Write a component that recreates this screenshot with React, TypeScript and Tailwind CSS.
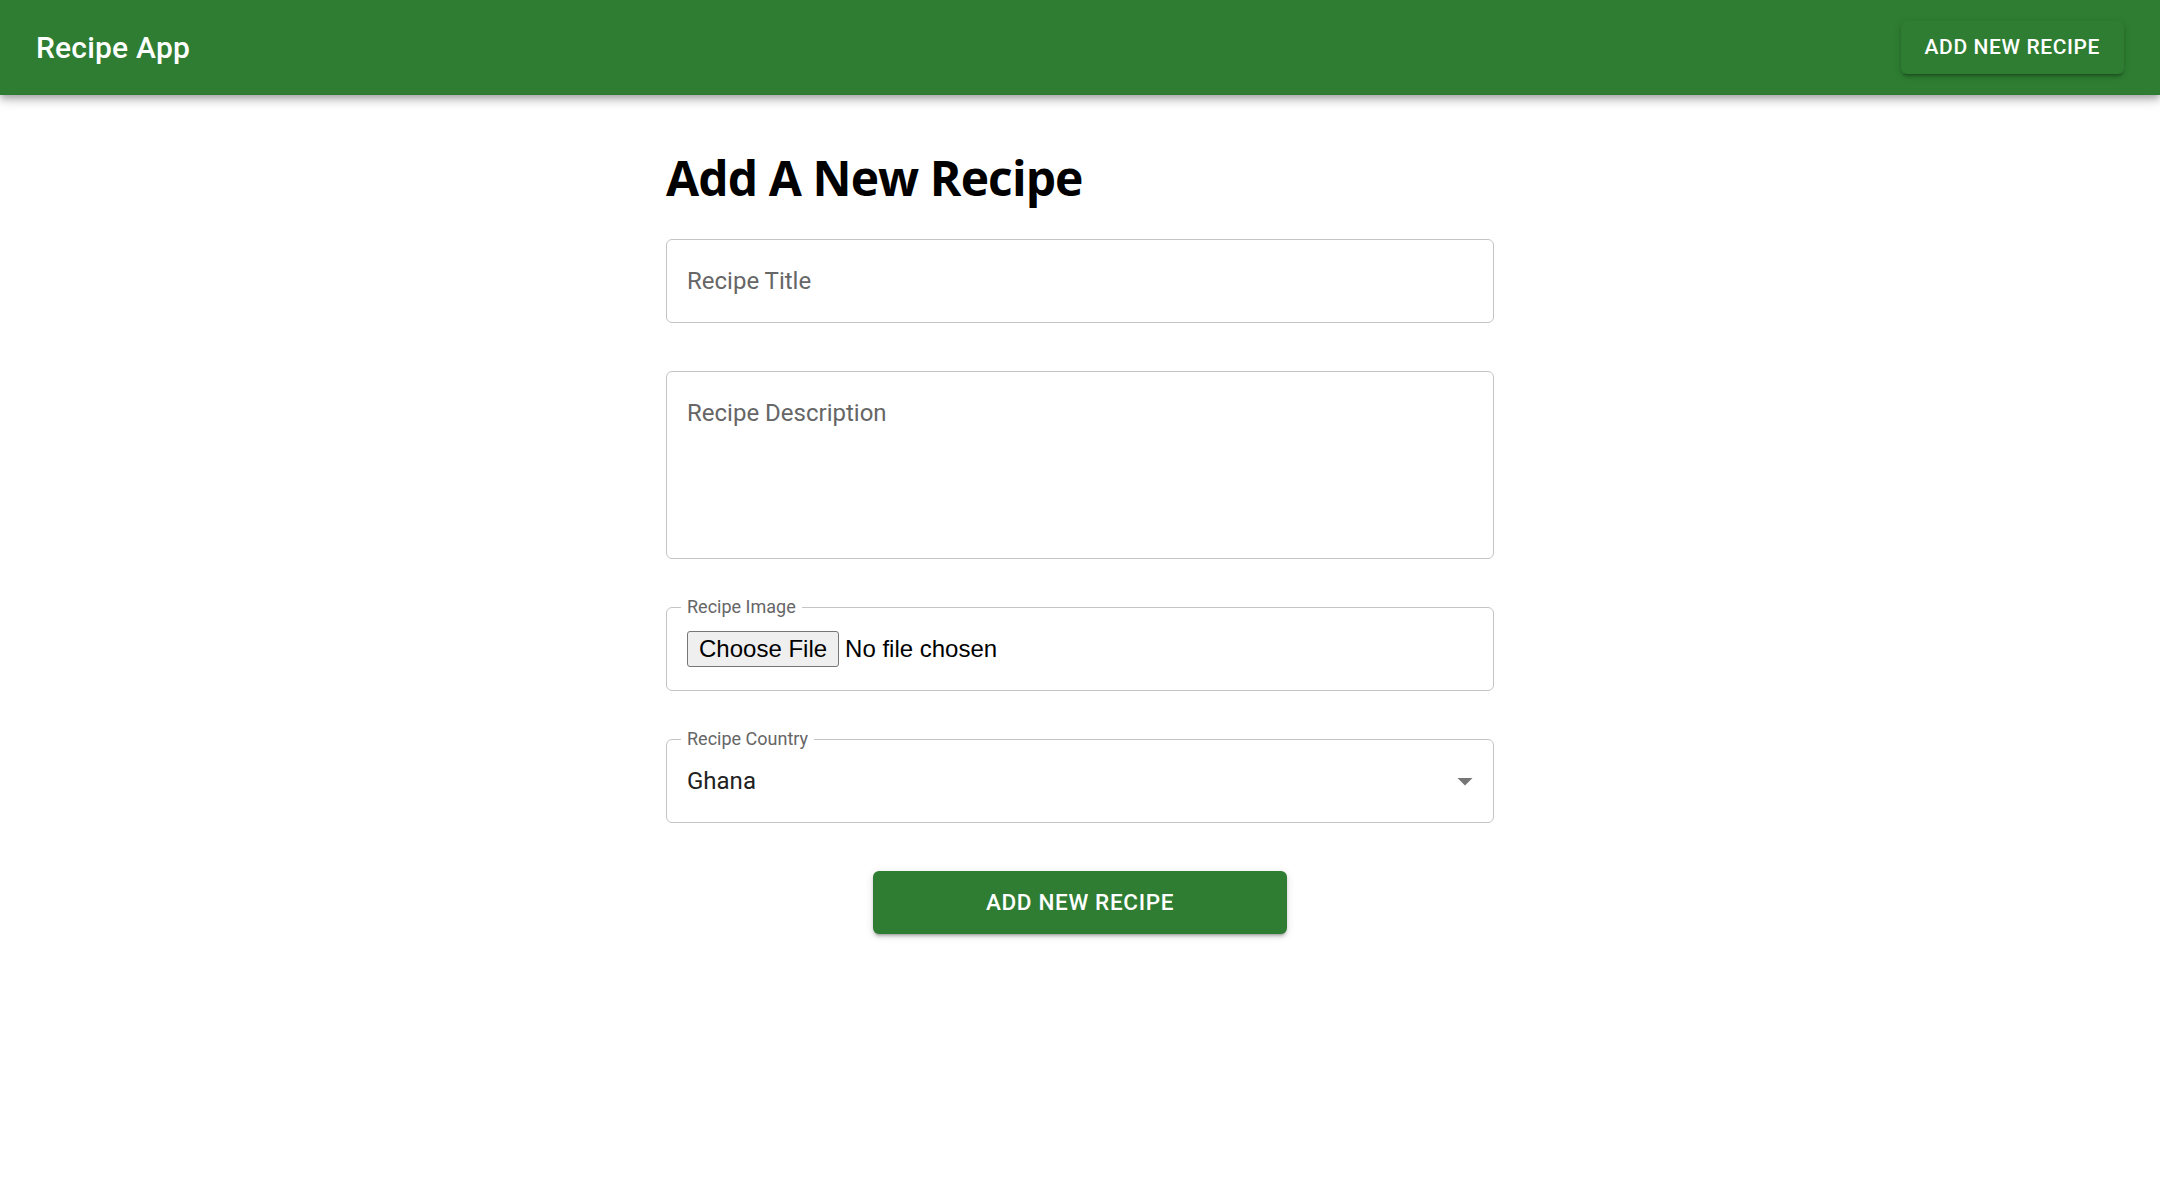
import { useState } from 'react';

const countries = ['Ghana', 'Nigeria', 'Kenya', 'Togo'];

function ArrowDrop() {
  return (
    <svg viewBox="0 0 24 24" className="w-[36px] h-[36px] fill-[#757575]">
      <path d="M7 10l5 5 5-5z" />
    </svg>
  );
}

function OutlinedBox({ label, children }: { label: string; children: React.ReactNode }) {
  return (
    <div className="relative h-[84px] rounded-[6px] border border-[#c4c4c4] flex items-center px-[20px]">
      {/* floating label sitting on the border */}
      <span className="absolute left-[14px] -top-[11px] bg-white px-[6px] text-[18px] leading-[20px] text-[#666666]">
        {label}
      </span>
      {children}
    </div>
  );
}

export default function App() {
  const [country, setCountry] = useState('Ghana');

  return (
    <div className="min-h-screen bg-white font-['Roboto',sans-serif]">
      {/* App bar */}
      <header className="h-[95px] bg-[#2e7d32] px-[36px] flex items-center justify-between shadow-[0_3px_6px_-1px_rgba(0,0,0,0.2),0_6px_8px_0_rgba(0,0,0,0.14),0_2px_15px_0_rgba(0,0,0,0.12)]">
        <h6 className="text-white text-[30px] font-medium leading-none tracking-[0.2px]">Recipe App</h6>
        <button className="h-[53px] px-[24px] rounded-[6px] bg-[#2e7d32] text-white text-[21px] font-medium uppercase tracking-[0.6px] shadow-[0_4px_2px_-3px_rgba(0,0,0,0.2),0_3px_3px_0_rgba(0,0,0,0.14),0_2px_8px_0_rgba(0,0,0,0.12)]">
          Add New Recipe
        </button>
      </header>

      <main className="w-[828px] mx-auto pt-[55px] pb-20">
        <h1 className="font-['Open_Sans',sans-serif] font-bold text-[48px] leading-[56px] tracking-[-0.9px] text-black mb-[33px]">
          Add A New Recipe
        </h1>

        <form className="flex flex-col gap-12" onSubmit={(e) => e.preventDefault()}>
          <div className="h-[84px] rounded-[6px] border border-[#c4c4c4] flex items-center px-[20px]">
            <input
              placeholder="Recipe Title"
              className="w-full outline-none text-[24px] text-black/85 placeholder:text-[#666666]"
            />
          </div>

          <div className="h-[188px] rounded-[6px] border border-[#c4c4c4] px-[20px] pt-[24px]">
            <textarea
              placeholder="Recipe Description"
              rows={4}
              className="w-full resize-none outline-none text-[24px] leading-[34.5px] text-black/85 placeholder:text-[#666666]"
            />
          </div>

          <OutlinedBox label="Recipe Image">
            <span className="h-[36px] px-[11px] flex items-center rounded-[3px] border border-[#767676] bg-[#efefef] font-['Liberation_Sans',Arial,sans-serif] text-[24px] text-black">
              Choose File
            </span>
            <span className="ml-[6px] font-['Liberation_Sans',Arial,sans-serif] text-[24px] text-black">No file chosen</span>
          </OutlinedBox>

          <OutlinedBox label="Recipe Country">
            <select
              value={country}
              onChange={(e) => setCountry(e.target.value)}
              className="appearance-none w-full bg-transparent outline-none text-[24px] text-[#212121]"
            >
              {countries.map((c) => (
                <option key={c}>{c}</option>
              ))}
            </select>
            <div className="absolute right-[10px] top-1/2 -translate-y-1/2 pointer-events-none">
              <ArrowDrop />
            </div>
          </OutlinedBox>

          <div className="flex justify-center">
            <button className="w-[414px] h-[63px] rounded-[6px] bg-[#2e7d32] text-white text-[22.5px] font-medium uppercase tracking-[0.65px] shadow-[0_4px_2px_-3px_rgba(0,0,0,0.2),0_3px_3px_0_rgba(0,0,0,0.14),0_2px_8px_0_rgba(0,0,0,0.12)]">
              Add New Recipe
            </button>
          </div>
        </form>
      </main>
    </div>
  );
}
